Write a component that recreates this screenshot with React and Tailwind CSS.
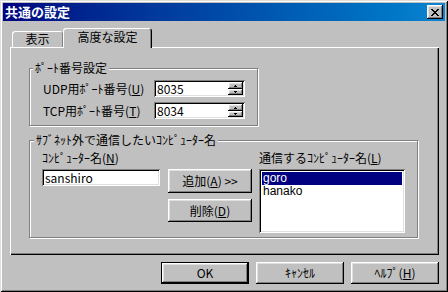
import React from "react";

const raised =
  "shadow-[inset_-1px_-1px_#000,inset_1px_1px_#fff,inset_-2px_-2px_#808080,inset_2px_2px_#dfdfdf]";
const sunken =
  "shadow-[inset_1px_1px_#808080,inset_-1px_-1px_#fff,inset_2px_2px_#000,inset_-2px_-2px_#dfdfdf]";
const etched =
  "border border-[#808080] shadow-[inset_1px_1px_#fff,1px_1px_#fff]";

function CloseGlyph() {
  const px = [
    [0, 0, 2], [6, 0, 2],
    [1, 1, 2], [5, 1, 2],
    [2, 2, 4],
    [3, 3, 2],
    [2, 4, 4],
    [1, 5, 2], [5, 5, 2],
    [0, 6, 2], [6, 6, 2],
  ];
  return (
    <svg width="8" height="7" viewBox="0 0 8 7" shapeRendering="crispEdges">
      {px.map(([x, y, w], i) => (
        <rect key={i} x={x} y={y} width={w} height={1} fill="#000" />
      ))}
    </svg>
  );
}

function Arrow({ down }) {
  return (
    <svg width="3" height="2" viewBox="0 0 3 2" shapeRendering="crispEdges">
      {down ? (
        <>
          <rect x="0" y="0" width="3" height="1" fill="#000" />
          <rect x="1" y="1" width="1" height="1" fill="#000" />
        </>
      ) : (
        <>
          <rect x="1" y="0" width="1" height="1" fill="#000" />
          <rect x="0" y="1" width="3" height="1" fill="#000" />
        </>
      )}
    </svg>
  );
}

function SpinField({ value }) {
  return (
    <div className={`w-[91px] h-[17px] bg-white ${sunken} flex p-[2px]`}>
      <span className="flex-1 pl-[1px] leading-[13px]">{value}</span>
      <div className="w-[15px] flex flex-col">
        <div className={`h-[7px] bg-[#c0c0c0] ${raised} flex items-center justify-center`}>
          <Arrow />
        </div>
        <div className={`h-[6px] bg-[#c0c0c0] ${raised} flex items-center justify-center`}>
          <Arrow down />
        </div>
      </div>
    </div>
  );
}

function Btn({ children, className = "" }) {
  return (
    <div className={`bg-[#c0c0c0] ${raised} flex items-center justify-center ${className}`}>
      {children}
    </div>
  );
}

export default function App() {
  return (
    <div className="w-[448px] h-[292px] bg-[#c0c0c0] p-[3px] flex flex-col text-[12px] leading-[12px] text-black font-['Noto_Sans_CJK_JP',sans-serif] shadow-[inset_1px_1px_#dfdfdf,inset_-1px_-1px_#000,inset_2px_2px_#fff,inset_-2px_-2px_#808080]">
      {/* title bar */}
      <div className="h-[18px] bg-gradient-to-r from-[#000080] to-[#1084d0] flex items-center justify-between pl-[2px] pr-[2px]">
        <span className="text-white font-bold text-[13px]">共通の設定</span>
        <div className={`w-[16px] h-[14px] bg-[#c0c0c0] ${raised} flex items-center justify-center`}>
          <CloseGlyph />
        </div>
      </div>

      <div className="mt-[7px] pl-[7px] pr-[6px]">
        {/* tabs */}
        <div className="h-[19px] flex items-end pl-[2px]">
          <div className="w-[51px] h-[16px] rounded-t-[3px] shadow-[inset_1px_1px_#fff,inset_-1px_0_#808080] flex items-center justify-center">
            表示
          </div>
          <div className="relative z-10 -mb-px w-[89px] h-[20px] bg-[#c0c0c0] rounded-t-[3px] shadow-[inset_1px_1px_#fff,inset_-1px_0_#000,inset_-2px_0_#808080] flex items-center justify-center pb-[3px]">
            高度な設定
          </div>
        </div>

        {/* panel */}
        <div className="h-[208px] pl-[19px] pt-[21px] shadow-[inset_1px_1px_#fff,inset_-1px_-1px_#000,inset_-2px_-2px_#808080]">
          {/* port group */}
          <div className={`relative w-[229px] h-[58px] ${etched} pl-[13px] pt-[11px] flex flex-col gap-[5px]`}>
            <span className="absolute left-[3px] top-[-7px] px-[2px] bg-[#c0c0c0]">ﾎﾟｰﾄ番号設定</span>
            <div className="flex items-center">
              <span className="w-[111px]">
                UDP用ﾎﾟｰﾄ番号(<u>U</u>)
              </span>
              <SpinField value="8035" />
            </div>
            <div className="flex items-center">
              <span className="w-[111px]">
                TCP用ﾎﾟｰﾄ番号(<u>T</u>)
              </span>
              <SpinField value="8034" />
            </div>
          </div>

          {/* computer group */}
          <div className={`relative mt-[14px] w-[389px] h-[98px] ${etched} pl-[12px] pt-[11px] flex items-start`}>
            <span className="absolute left-[4px] top-[-7px] px-[2px] bg-[#c0c0c0]">
              ｻﾌﾞﾈｯﾄ外で通信したいｺﾝﾋﾟｭｰﾀｰ名
            </span>
            <div className="w-[118px] flex flex-col">
              <span>
                ｺﾝﾋﾟｭｰﾀｰ名(<u>N</u>)
              </span>
              <div className={`mt-[5px] h-[17px] bg-white ${sunken} px-[3px] flex items-center`}>
                sanshiro
              </div>
            </div>
            <div className="ml-[8px] w-[84px] pt-[17px] flex flex-col gap-[6px]">
              <Btn className="h-[24px]">
                追加(<u>A</u>) &gt;&gt;
              </Btn>
              <Btn className="h-[23px]">
                削除(<u>D</u>)
              </Btn>
            </div>
            <div className="ml-[7px] w-[146px] flex flex-col">
              <span>
                通信するｺﾝﾋﾟｭｰﾀｰ名(<u>L</u>)
              </span>
              <div className={`mt-[5px] h-[64px] bg-white ${sunken} p-[3px] flex flex-col font-['Liberation_Sans',sans-serif]`}>
                <div className="h-[13px] leading-[13px] bg-[#000080] text-white pl-[1px]">goro</div>
                <div className="h-[13px] leading-[13px] pl-[1px]">hanako</div>
              </div>
            </div>
          </div>
        </div>
      </div>

      {/* dialog buttons */}
      <div className="mt-[7px] pr-[6px] flex justify-end gap-[7px]">
        <div className="w-[88px] h-[22px] border border-black">
          <Btn className="w-full h-full">OK</Btn>
        </div>
        <Btn className="w-[88px] h-[22px]">ｷｬﾝｾﾙ</Btn>
        <Btn className="w-[88px] h-[22px]">
          ﾍﾙﾌﾟ(<u>H</u>)
        </Btn>
      </div>
    </div>
  );
}
